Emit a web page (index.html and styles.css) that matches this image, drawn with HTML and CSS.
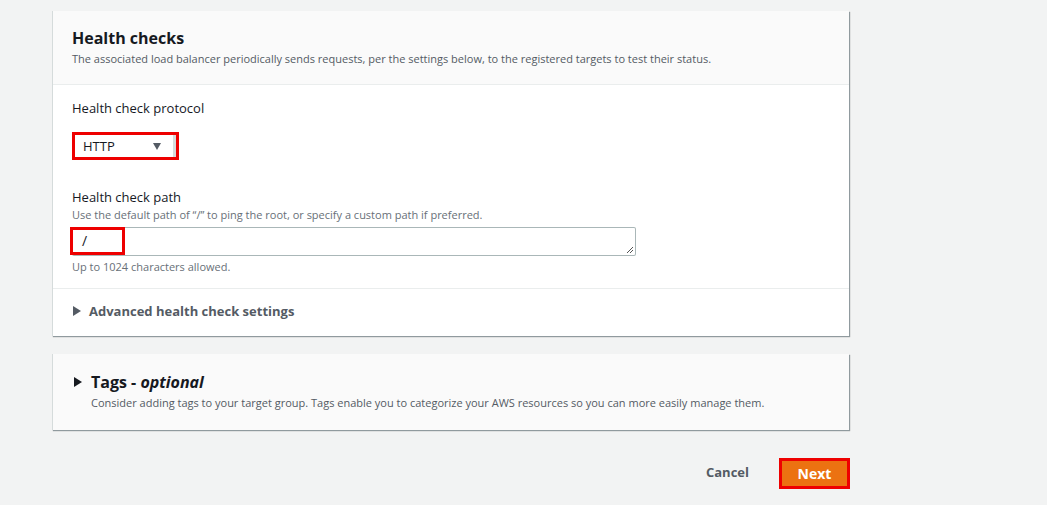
FILE: index.html
```html
<!DOCTYPE html>
<html>
<head>
<meta charset="utf-8">
<link rel="stylesheet" href="styles.css">
</head>
<body>
<div class="page">
  <section class="card">
    <header class="card-head">
      <h2 class="title">Health checks</h2>
      <p class="desc">The associated load balancer periodically sends requests, per the settings below, to the registered targets to test their status.</p>
    </header>
    <div class="card-body">
      <div class="field">
        <label class="label">Health check protocol</label>
        <div class="select hl">
          <span>HTTP</span>
          <span class="caret"></span>
        </div>
      </div>
      <div class="field field-path">
        <label class="label">Health check path</label>
        <p class="hint">Use the default path of “/” to ping the root, or specify a custom path if preferred.</p>
        <div class="textarea">
          <span class="slash-box hl">/</span>
          <svg class="grip" width="9" height="9" viewBox="0 0 9 9"><path d="M8 2 L2 8 M8 5 L5 8" stroke="#555" stroke-width="1"/></svg>
        </div>
        <p class="hint small">Up to 1024 characters allowed.</p>
      </div>
    </div>
    <div class="expander">
      <span class="tri"></span>
      <span class="exp-label">Advanced health check settings</span>
    </div>
  </section>

  <section class="card card-tags">
    <div class="tags-head">
      <span class="tri tri-dark"></span>
      <h2 class="title">Tags - <em>optional</em></h2>
    </div>
    <p class="desc tags-desc">Consider adding tags to your target group. Tags enable you to categorize your AWS resources so you can more easily manage them.</p>
  </section>

  <div class="actions">
    <button class="btn-link">Cancel</button>
    <button class="btn-primary">Next</button>
  </div>
</div>
</body>
</html>
```

FILE: styles.css
```css
* { box-sizing: border-box; }
html, body { margin: 0; padding: 0; }
body {
  background: #f2f3f3;
  font-family: "Open Sans", "Liberation Sans", sans-serif;
  color: #16191f;
  width: 1047px;
  height: 505px;
  overflow: hidden;
}
.page {
  padding: 11px 0 0 52px;
  width: 850px;
}
.card {
  background: #fff;
  border-left: 1px solid #d5dbdb;
  box-shadow: 1px 1px 1px 0 rgba(0,28,36,0.3), 1px 1px 1px 0 rgba(0,28,36,0.15);
  width: 797px;
}
.card-head {
  background: #fafafa;
  border-bottom: 1px solid #eaeded;
  padding: 16px 19px 16px 19px;
  height: 74px;
}
.title {
  margin: 0;
  font-size: 16px;
  font-weight: 700;
  line-height: 22px;
  color: #16191f;
}
.title em { font-weight: 700; font-style: italic; }
.desc {
  margin: 2px 0 0;
  font-size: 11px;
  line-height: 16px;
  color: #545b64;
}
.card-body {
  padding: 13px 19px 13px;
  border-bottom: 1px solid #eaeded;
}
.label {
  display: block;
  font-size: 13px;
  line-height: 20px;
  color: #16191f;
}
.select {
  margin-top: 14px;
  width: 107px;
  height: 28px;
  display: flex;
  align-items: center;
  justify-content: space-between;
  padding: 0 15px 0 8px;
  font-size: 13px;
  color: #16191f;
  background: #fff;
  box-shadow: inset -3px 0 0 #d5dbdb;
}
.hl { border: 3px solid #ee0000; }
.caret {
  width: 0; height: 0;
  border-left: 4.5px solid transparent;
  border-right: 4.5px solid transparent;
  border-top: 7px solid #545b64;
}
.field-path { margin-top: 27px; }
.hint {
  margin: 0;
  font-size: 11px;
  line-height: 16px;
  color: #687078;
}
.textarea {
  position: relative;
  margin-top: 4px;
  width: 564px;
  height: 29px;
  border: 1px solid #aab7b8;
  border-left: none;
  border-radius: 2px;
  background: #fff;
}
.slash-box {
  position: absolute;
  left: -2px; top: -1px;
  width: 55px; height: 28px;
  background: #fff;
  font-size: 14px;
  line-height: 21px;
  padding-left: 9px;
  color: #16191f;
}
.grip { position: absolute; right: 1px; bottom: 1px; }
.small { margin-top: 3px; }
.expander {
  height: 47px;
  display: flex;
  align-items: center;
  padding: 0 19px 3px 20px;
  gap: 8px;
}
.tri {
  width: 0; height: 0;
  border-top: 5px solid transparent;
  border-bottom: 5px solid transparent;
  border-left: 8px solid #545b64;
}
.tri-dark { border-left-color: #16191f; }
.exp-label {
  font-size: 13px;
  font-weight: 700;
  color: #545b64;
}
.card-tags {
  margin-top: 18px;
  background: #fafafa;
  height: 76px;
  padding: 17px 19px 0 21px;
}
.tags-head {
  display: flex;
  align-items: center;
  gap: 9px;
}
.tags-desc { margin: 2px 0 0 17px; }
.actions {
  margin-top: 28px;
  display: flex;
  justify-content: flex-end;
  align-items: center;
  width: 798px;
  gap: 30px;
}
.btn-link {
  background: none;
  border: none;
  font-family: inherit;
  font-size: 13px;
  font-weight: 700;
  color: #545b64;
  padding: 0;
  margin-bottom: 3px;
}
.btn-primary {
  width: 71px;
  height: 31px;
  background: #ec7211;
  border: 3px solid #ee0000;
  color: #fff;
  font-family: inherit;
  font-size: 14px;
  font-weight: 700;
  padding: 0;
}
```
